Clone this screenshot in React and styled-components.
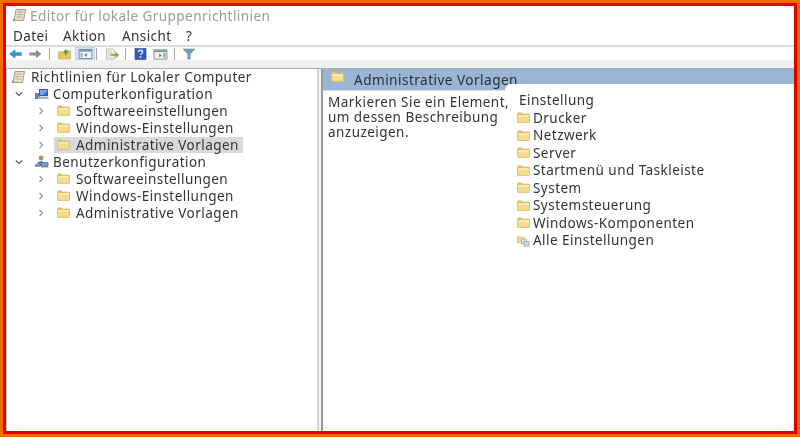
import React from "react";
import styled, { createGlobalStyle } from "styled-components";

const Global = createGlobalStyle`
  html, body { margin: 0; padding: 0; background: #fff; }
  #root { width: 800px; height: 437px; }
`;
const Frame = styled.div`
  box-sizing: border-box; width: 800px; height: 437px;
  border: 3px solid #ef6c00;
  font-family: "Noto Sans", "Open Sans", sans-serif;
  color: #2c2c2c;
`;
const Window = styled.div`
  box-sizing: border-box; width: 794px; height: 431px;
  border: 3px solid #e00000; background: #fff;
  display: flex; flex-direction: column; overflow: hidden;
  & span, & p { filter: blur(0.4px); }
`;
const TitleBar = styled.div`
  height: 20px; flex: none; display: flex; align-items: center; gap: 3px;
  padding: 0 0 2px 6px; box-sizing: border-box;
`;
const TitleText = styled.span`
  font-size: 13.6px; color: #9c9c9c; letter-spacing: .4px; white-space: nowrap;
`;
const MenuBar = styled.div`
  flex: none; display: flex; align-items: center; padding: 1px 0 0 7px;
  box-sizing: border-box; border-bottom: 2px solid #dcdcdc; height: 21px;
`;
const MenuItem = styled.span`
  font-size: 13.5px; letter-spacing: .4px; color: #333; width: ${p => p.$w}px;
`;
const ToolBar = styled.div`
  height: 13px; flex: none; display: flex; align-items: flex-end; padding-left: 2px;
`;
const ToolIcon = styled.svg`
  flex: none; margin-left: ${p => p.$ml || 0}px; width: ${p => p.$w}px; height: 12px;
`;
const ToolActive = styled.div`
  flex: none; margin-left: ${p => p.$ml}px; width: 20px; height: 13px; display: flex;
  align-items: center; justify-content: center; background: #d3e6f6; border: 1px solid #b9d7ef; box-sizing: border-box;
`;
const ToolSep = styled.div`
  flex: none; width: 1px; height: 12px; background: #a8a8a8; margin-left: ${p => p.$ml}px;
`;
const Strip = styled.div`
  height: 8px; flex: none; background: #f0f0f0;
`;
const Main = styled.div`
  flex: 1; min-height: 0; display: flex; border-top: 1px solid #a9b4ae;
`;
const TreePane = styled.div`
  width: 311px; flex: none; box-sizing: border-box; border-left: 1px solid #c8c8c8;
  display: flex; flex-direction: column; margin-top: -1px;
`;
const Splitter = styled.div`
  width: 6px; flex: none; background: linear-gradient(90deg, #d4d4d4 0 2px, #f5f5f5 2px 4px, #9a9a9a 4px 6px);
`;
const Row = styled.div`
  height: 17px; display: flex; align-items: center; flex: none; padding-left: ${p => p.$indent}px;
`;
const Chevron = styled.svg`
  flex: none; width: 8px; height: 8px; margin-right: ${p => p.$mr}px;
`;
const RowBody = styled.div`
  display: flex; align-items: center; gap: ${p => p.$gap}px; height: ${p => p.$selectable ? 16 : 17}px;
  padding: 0 4px 0 ${p => p.$selectable ? 3 : 0}px;
  margin-left: ${p => p.$selectable ? -3 : 0}px;
  background: ${p => (p.$selected ? "#d9d9d9" : "transparent")};
`;
const Label = styled.span`
  font-size: 13.5px; letter-spacing: .46px; color: #333; white-space: nowrap;
`;
const Right = styled.div`
  flex: 1; min-width: 0; display: flex; flex-direction: column;
`;
const Header = styled.div`
  height: 22px; flex: none; background: #9ab5d6; display: flex; align-items: center;
  padding-left: 8px; gap: 10px; box-sizing: border-box; border-bottom: 1px solid #d5deeb;
`;
const HeaderFolder = styled.div`
  margin-top: -7px; display: flex;
`;
const HeaderLabel = styled(Label)`
  font-size: 13.6px; color: #26303c;
`;
const Body = styled.div`
  flex: 1; display: flex; min-height: 0;
`;
const Desc = styled.div`
  width: 182px; flex: none; box-sizing: border-box; padding: 4px 0 0 5px;
  position: relative; z-index: 1;
`;
const DescText = styled.p`
  margin: 0; font-size: 13.5px; line-height: 15px; letter-spacing: .46px; color: #333;
  white-space: pre; 
`;
const Details = styled.div`
  flex: 1; margin-top: -7px; background: #fff; border-top-left-radius: 6px;
  position: relative; padding: 8px 0 0 14px;
`;
const ColHead = styled(Label)`
  display: block; height: 17px; line-height: 17px;
`;
const DetailList = styled.div`
  display: flex; flex-direction: column;
`;
const DetailRow = styled.div`
  height: 17.5px; display: flex; align-items: center; gap: 3px; margin-left: -2px;
`;

const Folder = () => (
  <svg width="13" height="11" viewBox="0 0 13 11">
    <path d="M.5 2V1.2c0-.4.3-.7.7-.7h3.2l1 1.2h6.4c.4 0 .7.3.7.7V3H.5z" fill="#e3b95a" />
    <rect x=".5" y="2.4" width="12" height="8" rx=".6" fill="#f6dc8f" stroke="#dcb863" strokeWidth=".8" />
    <rect x="1.5" y="3.3" width="10" height="1.4" fill="#fdf0c4" />
  </svg>
);
const ScrollIcon = () => (
  <svg width="15" height="14" viewBox="0 0 15 14">
    <path d="M4 1.5h9.5L11.5 12.5H2z" fill="#e6dfc8" stroke="#9a9280" strokeWidth=".9" />
    <path d="M5.5 4h5.5M5 6.5h5.5M4.5 9h5.5" stroke="#a8a08c" strokeWidth=".8" />
    <path d="M.8 12.5c0-1.4 1-1.8 2-1.6l-.5 2.2H1.4z" fill="#8b8576" />
  </svg>
);
const ComputerIcon = () => (
  <svg width="15" height="12" viewBox="0 0 15 12">
    <rect x="1" y="5" width="5" height="6" fill="#6f7f98" />
    <path d="M5 1h9v7H5z" fill="#2f5fc4" />
    <path d="M6 2l7 0 0 2-4 3H6z" fill="#6ea2ee" />
    <rect x="4" y="8.5" width="10.5" height="2.5" fill="#a9afbb" />
  </svg>
);
const UsersIcon = () => (
  <svg width="15" height="13" viewBox="0 0 15 13">
    <circle cx="7" cy="3" r="2.4" fill="#b98e5e" />
    <path d="M2.5 11c0-3.2 2-4.8 4.5-4.8s4.5 1.6 4.5 4.8z" fill="#3f7cc6" />
    <rect x="7.5" y="7.5" width="6.5" height="4.5" fill="#7f9bb8" stroke="#51657c" strokeWidth=".6" />
    <rect x="1" y="9" width="5" height="3" fill="#8796a8" />
  </svg>
);
const AllIcon = () => (
  <svg width="13" height="13" viewBox="0 0 14 13">
    <path d="M.5 2h3l1 1H8v6H.5z" fill="#f0d68e" stroke="#d4b56a" strokeWidth=".6" />
    <rect x="5" y="5" width="5" height="5" fill="#dfe3ea" stroke="#9aa2ad" strokeWidth=".7" />
    <rect x="7.5" y="7.5" width="5.5" height="5" fill="#cfd5de" stroke="#8d95a1" strokeWidth=".7" />
  </svg>
);
const Right_ = () => (
  <Chevron $mr={12} viewBox="0 0 8 8"><path d="M2.5 1l3 3-3 3" fill="none" stroke="#8f8f8f" strokeWidth="1.1" /></Chevron>
);
const Down = () => (
  <Chevron $mr={11} viewBox="0 0 8 8"><path d="M.8 2.5l3.2 3 3.2-3" fill="none" stroke="#555" strokeWidth="1.1" /></Chevron>
);

const children = ["Softwareeinstellungen", "Windows-Einstellungen", "Administrative Vorlagen"];
const details = ["Drucker", "Netzwerk", "Server", "Startmenü und Taskleiste", "System", "Systemsteuerung", "Windows-Komponenten"];

const TreeChildren = ({ selected }) => children.map(c => (
  <Row key={c} $indent={30}>
    <Right_ />
    <RowBody $gap={6} $selectable $selected={selected === c}>
      <Folder /><Label>{c}</Label>
    </RowBody>
  </Row>
));

export default function App() {
  return (
    <Frame>
      <Global />
      <Window>
        <TitleBar><ScrollIcon /><TitleText>Editor für lokale Gruppenrichtlinien</TitleText></TitleBar>
        <MenuBar>
          <MenuItem $w={50}>Datei</MenuItem>
          <MenuItem $w={59}>Aktion</MenuItem>
          <MenuItem $w={64}>Ansicht</MenuItem>
          <MenuItem $w={20}>?</MenuItem>
        </MenuBar>
        <ToolBar>
          <ToolIcon $w={15} viewBox="0 0 15 13"><path d="M1 6.5L7 2v3h7v3H7v3z" fill="#2b9ae0" stroke="#1c7fc4" strokeWidth=".5" /></ToolIcon>
          <ToolIcon $ml={5} $w={15} viewBox="0 0 15 13"><path d="M14 6.5L8 2v3H1v3h7v3z" fill="#8f8f8f" /></ToolIcon>
          <ToolSep $ml={6} />
          <ToolIcon $ml={7} $w={15} viewBox="0 0 15 13">
            <path d="M1 4h5l1-1h7v9H1z" fill="#e7c567" stroke="#b89a45" strokeWidth=".6" />
            <path d="M9 8V3.5M6.8 5.5L9 2.5l2.2 3" fill="none" stroke="#3f9a35" strokeWidth="1.3" />
          </ToolIcon>
          <ToolActive $ml={3}>
            <svg width="15" height="10" viewBox="0 0 15 11">
              <rect x=".5" y=".5" width="14" height="10" fill="#f4f6f8" stroke="#6f7f8d" />
              <rect x="1" y="1" width="13" height="2" fill="#7e98ad" />
              <path d="M9 4.5v4L6 6.5z" fill="#4d9a45" />
              <rect x="2" y="4" width="2.5" height="5" fill="#9fb2c2" />
            </svg>
          </ToolActive>
          <ToolSep $ml={1} />
          <ToolIcon $ml={8} $w={15} viewBox="0 0 15 13">
            <path d="M1 1h7l2 2v9H1z" fill="#f2f0e6" stroke="#a7a493" strokeWidth=".7" />
            <path d="M3 4h4M3 6h4M3 8h3" stroke="#b7b4a4" strokeWidth=".7" />
            <path d="M6 6.5h5V4l3.5 3.5L11 11V8.5H6z" fill="#69b14a" />
          </ToolIcon>
          <ToolSep $ml={5} />
          <ToolIcon $ml={8} $w={13} viewBox="0 0 13 13">
            <rect x=".5" y=".5" width="12" height="12" fill="#3558b8" stroke="#2b4590" strokeWidth=".6" />
            <path d="M4.3 4.5c0-1.4 1-2 2.2-2s2.3.7 2.3 1.9c0 1.6-2.2 1.6-2.2 3.2" fill="none" stroke="#e9eefb" strokeWidth="1.5" />
            <rect x="5.6" y="9" width="1.7" height="1.7" fill="#e9eefb" />
          </ToolIcon>
          <ToolIcon $ml={6} $w={15} viewBox="0 0 15 13">
            <rect x=".5" y="2" width="14" height="10" fill="#f4f6f8" stroke="#7c8790" />
            <rect x="1" y="2.5" width="13" height="2" fill="#7f8b95" />
            <path d="M6 6v4l3-2z" fill="#4d9a45" />
            <rect x="10.5" y="5.5" width="2.5" height="5" fill="#97a3ad" />
          </ToolIcon>
          <ToolSep $ml={6} />
          <ToolIcon $ml={7} $w={14} viewBox="0 0 14 13">
            <path d="M.5 1h13L8.5 6.5V12h-3V6.5z" fill="#7f9db5" stroke="#66829a" strokeWidth=".5" />
          </ToolIcon>
        </ToolBar>
        <Strip />
        <Main>
          <TreePane>
            <Row $indent={4}><RowBody $gap={5}><ScrollIcon /><Label>Richtlinien für Lokaler Computer</Label></RowBody></Row>
            <Row $indent={8}><Down /><RowBody $gap={4}><ComputerIcon /><Label>Computerkonfiguration</Label></RowBody></Row>
            <TreeChildren selected="Administrative Vorlagen" />
            <Row $indent={8}><Down /><RowBody $gap={4}><UsersIcon /><Label>Benutzerkonfiguration</Label></RowBody></Row>
            <TreeChildren />
          </TreePane>
          <Splitter />
          <Right>
            <Header><HeaderFolder><Folder /></HeaderFolder><HeaderLabel>Administrative Vorlagen</HeaderLabel></Header>
            <Body>
              <Desc><DescText>{"Markieren Sie ein Element,\num dessen Beschreibung\nanzuzeigen."}</DescText></Desc>
              <Details>
                <ColHead>Einstellung</ColHead>
                <DetailList>
                  {details.map(d => (
                    <DetailRow key={d}><Folder /><Label>{d}</Label></DetailRow>
                  ))}
                  <DetailRow><AllIcon /><Label>Alle Einstellungen</Label></DetailRow>
                </DetailList>
              </Details>
            </Body>
          </Right>
        </Main>
      </Window>
    </Frame>
  );
}
